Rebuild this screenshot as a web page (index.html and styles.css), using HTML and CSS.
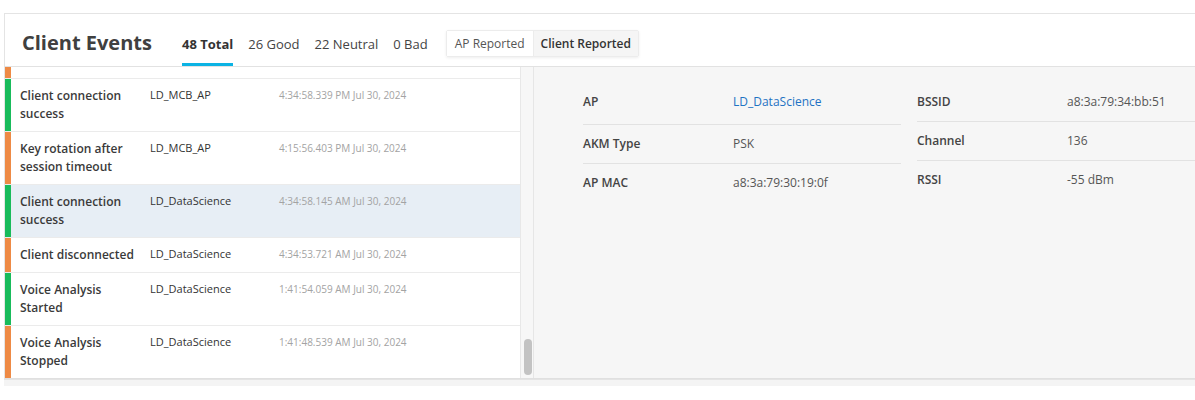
FILE: index.html
```html
<!DOCTYPE html>
<html lang="en">
<head>
    <meta charset="UTF-8">
    <meta name="viewport" content="width=device-width, initial-scale=1.0">
    <title>Client Events</title>
    <link rel="stylesheet" href="styles.css">
</head>
<body>
    <div class="card">
        <div class="card-header">
            <h1 class="title">Client Events</h1>
            <div class="tabs">
                <span class="tab active">48 Total</span>
                <span class="tab">26 Good</span>
                <span class="tab">22 Neutral</span>
                <span class="tab">0 Bad</span>
            </div>
            <div class="toggle">
                <span class="toggle-btn">AP Reported</span>
                <span class="toggle-btn selected">Client Reported</span>
            </div>
        </div>

        <div class="card-body">
            <div class="event-list">
                <!-- tail of the row scrolled above -->
                <div class="row row-cut bad"><span class="bar"></span></div>

                <div class="row good">
                    <span class="bar"></span>
                    <div class="name">Client connection success</div>
                    <div class="ap">LD_MCB_AP</div>
                    <div class="time">4:34:58.339 PM Jul 30, 2024</div>
                </div>
                <div class="row bad">
                    <span class="bar"></span>
                    <div class="name">Key rotation after session timeout</div>
                    <div class="ap">LD_MCB_AP</div>
                    <div class="time">4:15:56.403 PM Jul 30, 2024</div>
                </div>
                <div class="row good selected">
                    <span class="bar"></span>
                    <div class="name">Client connection success</div>
                    <div class="ap">LD_DataScience</div>
                    <div class="time">4:34:58.145 AM Jul 30, 2024</div>
                </div>
                <div class="row bad">
                    <span class="bar"></span>
                    <div class="name">Client disconnected</div>
                    <div class="ap">LD_DataScience</div>
                    <div class="time">4:34:53.721 AM Jul 30, 2024</div>
                </div>
                <div class="row good">
                    <span class="bar"></span>
                    <div class="name">Voice Analysis Started</div>
                    <div class="ap">LD_DataScience</div>
                    <div class="time">1:41:54.059 AM Jul 30, 2024</div>
                </div>
                <div class="row bad">
                    <span class="bar"></span>
                    <div class="name">Voice Analysis Stopped</div>
                    <div class="ap">LD_DataScience</div>
                    <div class="time">1:41:48.539 AM Jul 30, 2024</div>
                </div>
            </div>

            <div class="scroll-track">
                <div class="scroll-thumb"></div>
            </div>

            <div class="details">
                <div class="detail-col">
                    <div class="detail">
                        <span class="label">AP</span>
                        <a class="value link" href="#">LD_DataScience</a>
                    </div>
                    <div class="detail">
                        <span class="label">AKM Type</span>
                        <span class="value">PSK</span>
                    </div>
                    <div class="detail">
                        <span class="label">AP MAC</span>
                        <span class="value">a8:3a:79:30:19:0f</span>
                    </div>
                </div>
                <div class="detail-col">
                    <div class="detail">
                        <span class="label">BSSID</span>
                        <span class="value">a8:3a:79:34:bb:51</span>
                    </div>
                    <div class="detail">
                        <span class="label">Channel</span>
                        <span class="value">136</span>
                    </div>
                    <div class="detail">
                        <span class="label">RSSI</span>
                        <span class="value">-55 dBm</span>
                    </div>
                </div>
            </div>
        </div>
    </div>
    <div class="page-foot"></div>
</body>
</html>
```

FILE: styles.css
```css
body {
    font-family: "Open Sans", "Noto Sans", sans-serif;
    background-color: #fff;
    color: #333;
    margin: 0;
    overflow: hidden;
}

.card {
    margin: 13px 0 0 4px;
    border: 1px solid #e4e4e4;
    border-right: none;
    background-color: #fff;
}

/* Header */
.card-header {
    display: flex;
    align-items: flex-end;
    height: 52px;
    padding-left: 17px;
    border-bottom: 1px solid #e2e2e2;
}

.title {
    margin: 0 30px 0 0;
    padding-bottom: 10px;
    font-size: 20px;
    line-height: 26px;
    font-weight: 700;
    color: #404040;
}

.tabs {
    display: flex;
}

.tab {
    margin-right: 15px;
    padding-bottom: 10px;
    border-bottom: 3px solid transparent;
    font-size: 13px;
    line-height: 18px;
    color: #444;
}

.tab.active {
    font-weight: 700;
    color: #333;
    border-bottom-color: #0bb3e4;
}

.toggle {
    display: flex;
    box-sizing: border-box;
    height: 27px;
    margin: 0 0 9px 3px;
    border: 1px solid #ececec;
    border-radius: 2px;
    box-shadow: 0 1px 3px rgba(0, 0, 0, 0.07);
}

.toggle-btn {
    display: flex;
    align-items: center;
    padding: 0 8px;
    font-size: 12px;
    color: #555;
    background-color: #fff;
}

.toggle-btn + .toggle-btn {
    border-left: 1px solid #ececec;
}

.toggle-btn.selected {
    padding: 0 7px;
    font-weight: 600;
    color: #333;
    background-color: #f5f5f5;
}

/* Body */
.card-body {
    display: flex;
    height: 311px;
    border-bottom: 1px solid #e0e0e0;
}

.event-list {
    width: 515px;
    flex-shrink: 0;
    overflow: hidden;
    border-right: 1px solid #e8e8e8;
}

.row {
    display: flex;
    align-items: flex-start;
    padding: 8px 0;
    border-bottom: 1px solid #ebebeb;
    position: relative;
}

.row-cut {
    height: 11px;
    padding: 0;
}

.row.selected {
    background-color: #e7eef5;
}

.bar {
    position: absolute;
    left: 0;
    top: 0;
    bottom: 0;
    width: 6px;
}

.row.good .bar {
    background-color: #19bb5b;
}

.row.bad .bar {
    background-color: #ee8a45;
}

.name {
    box-sizing: border-box;
    width: 145px;
    padding: 0 12px 0 15px;
    font-size: 12px;
    line-height: 18px;
    font-weight: 600;
    color: #3a3a3a;
}

.ap {
    width: 129px;
    font-size: 11px;
    line-height: 16px;
    color: #333;
}

.time {
    font-size: 10px;
    line-height: 16px;
    color: #a3a3a3;
}

/* Scrollbar */
.scroll-track {
    display: flex;
    flex-direction: column;
    justify-content: flex-end;
    width: 13px;
    flex-shrink: 0;
    padding-bottom: 3px;
    box-sizing: border-box;
    background-color: #f7f7f7;
    border-right: 1px solid #e6e6e6;
}

.scroll-thumb {
    height: 36px;
    width: 8px;
    margin-left: 3px;
    border-radius: 4px;
    background-color: #c3c3c3;
}

/* Detail panel */
.details {
    flex: 1;
    display: flex;
    gap: 16px;
    align-items: flex-start;
    padding: 16px 0 0 49px;
    background-color: #f6f6f6;
    overflow: hidden;
}

.detail-col {
    width: 318px;
    flex-shrink: 0;
}

.detail {
    display: flex;
    padding: 9px 0;
    border-bottom: 1px solid #e2e2e2;
    line-height: 20px;
}

.detail:last-child {
    border-bottom: none;
}

.label {
    width: 150px;
    flex-shrink: 0;
    font-size: 12px;
    font-weight: 600;
    color: #444;
}

.value {
    font-size: 12px;
    color: #555;
}

.link {
    display: inline-block;
    padding-bottom: 3px;
    color: #1f73c3;
    text-decoration: none;
}

.page-foot {
    height: 6px;
    margin-left: 4px;
    background-color: #f4f4f4;
}
```
